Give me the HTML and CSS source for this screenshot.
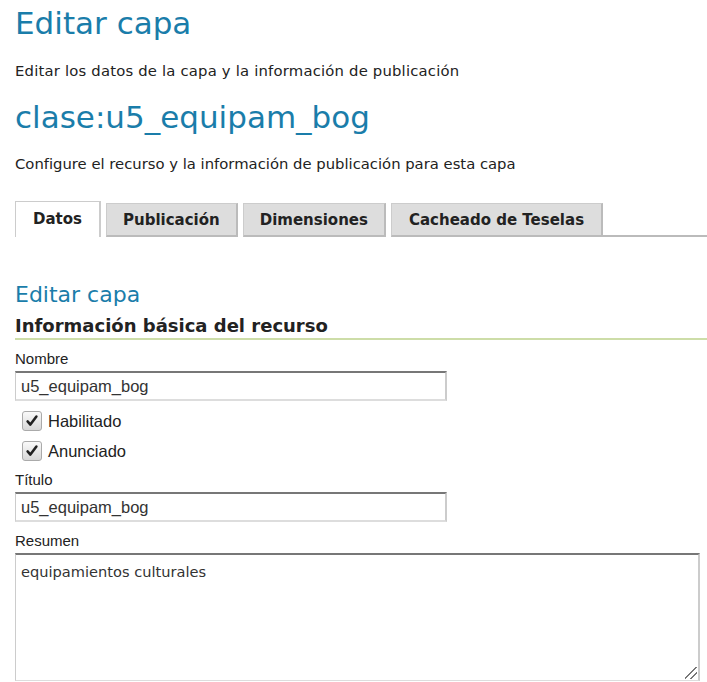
FILE: index.html
```html
<!DOCTYPE html>
<html lang="es">
<head>
<meta charset="utf-8">
<title>Editar capa</title>
<link rel="stylesheet" href="styles.css">
</head>
<body>
<div class="page">
  <h1 class="title">Editar capa</h1>
  <p class="desc">Editar los datos de la capa y la información de publicación</p>
  <h1 class="title layer">clase:u5_equipam_bog</h1>
  <p class="desc desc2">Configure el recurso y la información de publicación para esta capa</p>

  <div class="tabs">
    <div class="tab active">Datos</div>
    <div class="tab">Publicación</div>
    <div class="tab">Dimensiones</div>
    <div class="tab">Cacheado de Teselas</div>
    <div class="tab-rest"></div>
  </div>

  <h2 class="subtitle">Editar capa</h2>
  <h3 class="section">Información básica del recurso</h3>

  <div class="form">
    <label class="lbl">Nombre</label>
    <div class="input">u5_equipam_bog</div>
    <div class="check"><span class="box"><svg viewBox="0 0 20 20" width="20" height="20"><path d="M4.5 10.5 L8 14.5 L15.5 4.5" fill="none" stroke="#222" stroke-width="3.2" stroke-linecap="round" stroke-linejoin="round"/></svg></span><span class="check-lbl">Habilitado</span></div>
    <div class="check"><span class="box"><svg viewBox="0 0 20 20" width="20" height="20"><path d="M4.5 10.5 L8 14.5 L15.5 4.5" fill="none" stroke="#222" stroke-width="3.2" stroke-linecap="round" stroke-linejoin="round"/></svg></span><span class="check-lbl">Anunciado</span></div>
    <label class="lbl">Título</label>
    <div class="input">u5_equipam_bog</div>
    <label class="lbl">Resumen</label>
    <div class="textarea">equipamientos culturales<span class="grip"></span></div>
  </div>
</div>
</body>
</html>
```

FILE: styles.css
```css
html, body {
  margin: 0;
  padding: 0;
  background: #fff;
}
body {
  font-family: "DejaVu Sans", Verdana, sans-serif;
  color: #222;
  overflow: hidden;
}
.page {
  padding: 0 0 0 15px;
}
.title {
  margin: 0;
  padding-top: 4px;
  font-weight: normal;
  font-size: 31px;
  line-height: 38px;
  color: #1a7daa;
}
.desc {
  margin: 20px 0 0;
  font-size: 14.8px;
  line-height: 18px;
  color: #222;
}
.desc:first-of-type {
  letter-spacing: 0.2px;
}
.layer {
  padding-top: 18px;
}
.desc2 {
  margin-top: 19px;
  letter-spacing: 0;
}
.tabs {
  display: flex;
  align-items: flex-end;
  margin-top: 28px;
  height: 36px;
}
.tab {
  box-sizing: border-box;
  height: 34px;
  padding: 0 16px;
  margin-right: 5px;
  background: #ddd;
  border: 1px solid #ccc;
  border-right: 2px solid #bbb;
  border-bottom: 2px solid #bbb;
  font-weight: bold;
  font-size: 15px;
  line-height: 32px;
  color: #222;
}
.tab.active {
  background: #fff;
  height: 36px;
  padding: 0 17px;
  border: 1px solid #ccc;
  border-bottom: none;
  border-right: 2px solid #ccc;
  line-height: 34px;
}
.tab:nth-child(4) {
  padding: 0 17px;
  margin-right: 0;
}
.tab-rest {
  flex: 1;
  height: 2px;
  background: #bbb;
}
.subtitle {
  margin: 44px 0 0;
  font-weight: normal;
  font-size: 22px;
  line-height: 28px;
  color: #1a7daa;
}
.section {
  margin: 5px 0 0;
  font-weight: bold;
  font-size: 18px;
  line-height: 24px;
  color: #222;
  padding-bottom: 0;
  border-bottom: 2px solid #cddda8;
}
.form {
  display: flex;
  flex-direction: column;
  align-items: flex-start;
  font-family: "Liberation Sans", Arial, sans-serif;
}
.lbl {
  font-size: 15px;
  line-height: 18px;
  margin-top: 10px;
  color: #222;
}
.input {
  box-sizing: border-box;
  width: 432px;
  height: 30px;
  margin-top: 3px;
  border: 1px solid #ccc;
  border-top: 2px solid #777;
  border-right: 2px solid #ccc;
  border-bottom: 2px solid #ddd;
  padding: 0 5px;
  font-size: 16.5px;
  line-height: 26px;
  color: #333;
}
.check {
  display: flex;
  align-items: center;
  margin-left: 7px;
  margin-top: 9px;
  height: 21px;
}
.box {
  box-sizing: border-box;
  width: 20px;
  height: 20px;
  border: 1px solid #aaa;
  border-radius: 3px;
  background: linear-gradient(#fafafa, #d8d8d8);
  display: flex;
  align-items: center;
  justify-content: center;
}
.box svg {
  width: 16px;
  height: 16px;
}
.check-lbl {
  margin-left: 6px;
  font-size: 16.5px;
  line-height: 20px;
  color: #222;
}
.textarea {
  position: relative;
  box-sizing: border-box;
  width: 685px;
  height: 128px;
  margin-top: 3px;
  border: 1px solid #ccc;
  border-top: 2px solid #777;
  border-right: 2px solid #ccc;
  border-bottom: 1px solid #ddd;
  padding: 8px 5px;
  font-family: "DejaVu Sans", Verdana, sans-serif;
  font-size: 14.6px;
  line-height: 18px;
  color: #333;
}
.grip {
  position: absolute;
  right: 1px;
  bottom: 1px;
  width: 12px;
  height: 12px;
  background: linear-gradient(135deg, transparent 45%, #777 45%, #777 52%, transparent 52%, transparent 70%, #777 70%, #777 77%, transparent 77%);
}
```
